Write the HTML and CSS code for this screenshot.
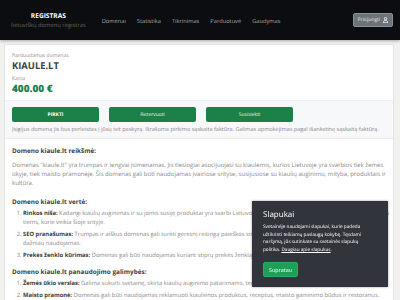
FILE: index.html
```
<!DOCTYPE html>
<html>
<head>
<meta charset="utf-8">
<link rel="stylesheet" href="styles.css">
</head>
<body>

<div class="topBar">
  <div class="brand">
    <div class="brandName">REGISTRAS</div>
    <div class="brandSub">lietuviškų domenų registras</div>
  </div>
  <div class="nav">
    <a>Domenai</a>
    <a>Statistika</a>
    <a>Tikrinimas</a>
    <a>Parduotuvė</a>
    <a>Gaudymas</a>
  </div>
  <button class="btn-login">Prisijungti
    <svg width="5" height="6" viewBox="0 0 10 12"><circle cx="5" cy="3.2" r="2.4" fill="none" stroke="#fff" stroke-width="1.6"/><path d="M1 11.5v-1.5c0-2 1.8-3.3 4-3.3s4 1.3 4 3.3v1.5z" fill="none" stroke="#fff" stroke-width="1.6"/></svg>
  </button>
</div>

<div class="page">
  <div class="card">
    <div class="cardHead">
      <div class="label">Parduodamas domenas</div>
      <div class="domain">KIAULE.LT</div>
      <div class="label">Kaina</div>
      <div class="price">400.00 €</div>
    </div>

    <div class="cardActions">
      <div class="btnRow">
        <button class="btn btn-buy">PIRKTI</button>
        <button class="btn">Rezervuoti</button>
        <button class="btn">Susisiekti</button>
      </div>
      <div class="note">Įsigijus domeną jis bus perleistas į jūsų ivit paskyrą. Išrašoma pirkimo sąskaita faktūra. Galimas apmokėjimas pagal išankstinę sąskaitą faktūrą.</div>
    </div>

    <div class="cardBody">
      <h4>Domeno kiaule.lt reikšmė:</h4>
      <p>Domenas "kiaule.lt" yra trumpas ir lengvai įsimenamas. Jis tiesiogiai asocijuojasi su kiaulėmis, kurios Lietuvoje yra svarbios tiek žemės ūkyje, tiek maisto pramonėje. Šis domenas gali būti naudojamas įvairiose srityse, susijusiose su kiaulių auginimu, mityba, produktais ir kultūra.</p>

      <h4>Domeno kiaule.lt vertė:</h4>
      <ol>
        <li><b>Rinkos niša:</b> Kadangi kiaulių auginimas ir su jomis susiję produktai yra svarbi Lietuvos ekonomikos dalis, šis domenas gali būti vertingas tiems, kurie veikia šioje srityje.</li>
        <li><b>SEO pranašumas:</b> Trumpas ir aiškus domenas gali turėti geresnį reitingą paieškos sistemose, nes jis lengvai įsimenamas ir gali būti dažniau naudojamas.</li>
        <li><b>Prekės ženklo kūrimas:</b> Domenas gali būti naudojamas kuriant stiprų prekės ženklą, susijusį su kiaulininkyste.</li>
      </ol>

      <h4>Domeno kiaule.lt panaudojimo galimybės:</h4>
      <ol>
        <li><b>Žemės ūkio verslas:</b> Galima sukurti svetainę, skirtą kiaulių auginimo patarimams, technologijoms ir naujienoms.</li>
        <li><b>Maisto pramonė:</b> Domenas gali būti naudojamas reklamuoti kiaulienos produktus, receptus, maisto gaminimo būdus ir restoranus.</li>
      </ol>
    </div>
  </div>
</div>

<div class="cookieBox">
  <div class="cookieTitle">Slapukai</div>
  <div class="cookieText">Svetainėje naudojami slapukai, kurie padeda užtikrinti teikiamų paslaugų kokybę. Tęsdami naršymą, jūs sutinkate su svetainės slapukų politika. <a>Daugiau apie slapukus</a>.</div>
  <button class="btn-ok">Supratau</button>
</div>

</body>
</html>
```
FILE: styles.css
```
/* bendri nustatymai */
body {
  margin: 0;
  background-color: #f1f1ef;
  font-family: "Open Sans", sans-serif;
  color: #878787;
  overflow: hidden;
  text-rendering: geometricPrecision;
}

button {
  text-rendering: geometricPrecision;
}

/* viršutinė juosta */
.topBar {
  display: flex;
  align-items: center;
  height: 40px;
  background-color: #0b0d11;
  padding: 0 7px 0 11px;
  box-shadow: 0 1px 3px rgba(0,0,0,0.3);
}

.brand {
  display: flex;
  flex-direction: column;
  align-items: center;
}

.brandName {
  font-weight: 700;
  font-size: 6.6px;
  color: #fff;
  line-height: 9px;
}

.brandSub {
  font-size: 5.8px;
  color: #666;
  margin-top: 1px;
}

.nav {
  display: flex;
  gap: 11px;
  margin-left: 16px;
  margin-top: 1px;
}

.nav a {
  font-size: 5.7px;
  color: #a8a8a8;
}

.btn-login {
  margin-left: auto;
  display: flex;
  align-items: center;
  gap: 3px;
  height: 14px;
  padding: 0 4px 0 4px;
  background-color: #6c737b;
  border: 1px solid #8a9097;
  border-radius: 2px;
  color: #e8e8e8;
  font-family: "Open Sans", sans-serif;
  font-size: 4.8px;
}

/* kortelė */
.page {
  padding: 4px 6px 0 4px;
}

.card {
  background-color: #fff;
  border: 1px solid #e4e4e4;
  border-radius: 2px;
}

.cardHead {
  padding: 8px 7px 6px;
}

.label {
  font-size: 5.1px;
  line-height: 7px;
  color: #8c8c8c;
}

.domain {
  font-weight: 700;
  font-size: 9.4px;
  line-height: 11px;
  color: #3b4049;
  margin: 0 0 5px;
}

.price {
  font-weight: 800;
  font-size: 10px;
  line-height: 11px;
  color: #1d7f48;
}

.cardActions {
  background-color: #f7f8f9;
  border-top: 1px solid #f0f0f0;
  border-bottom: 1px solid #ececec;
  padding: 6px 7px 5px;
}

.btnRow {
  display: flex;
  gap: 10px;
}

.btn {
  width: 87px;
  height: 15px;
  background-color: #1c8049;
  border: none;
  border-radius: 2px;
  color: #e8f3ec;
  font-family: "Open Sans", sans-serif;
  font-size: 5px;
}

.btn-buy {
  font-weight: 700;
  color: #fff;
}

.note {
  font-size: 5.55px;
  margin-top: 3px;
}

.cardBody {
  padding: 7px 3px 10px 7px;
}

.cardBody h4 {
  margin: 0 0 3px;
  font-size: 6.4px;
  line-height: 9px;
  font-weight: 700;
  color: #3a3d42;
}

.cardBody p {
  margin: 6px 0 9px;
  font-size: 6px;
  line-height: 9px;
}

.cardBody ol {
  margin: 0 0 7px;
  padding-left: 11px;
  font-size: 5.8px;
  line-height: 9px;
}

.cardBody ol li {
  margin-bottom: 3px;
}

.cardBody b {
  color: #3a3d42;
}

/* slapukų langas */
.cookieBox {
  position: fixed;
  left: 252px;
  top: 201px;
  width: 136px;
  height: 86px;
  box-sizing: border-box;
  padding: 8px 22px 8px 11px;
  background-color: #31353b;
  box-shadow: 0 0 2px rgba(0,0,0,0.4);
  color: #fff;
  font-family: "Open Sans", sans-serif;
}

.cookieTitle {
  font-size: 8px;
  margin-bottom: 4px;
}

.cookieText {
  font-size: 4.7px;
  line-height: 7.7px;
}

.cookieText a {
  text-decoration: underline;
}

.btn-ok {
  margin-top: 5px;
  height: 15px;
  padding: 0 5px;
  background-color: #1f9e57;
  border: 1px solid #27ad62;
  border-radius: 2px;
  color: #fff;
  font-family: "Open Sans", sans-serif;
  font-size: 5.4px;
}
```
